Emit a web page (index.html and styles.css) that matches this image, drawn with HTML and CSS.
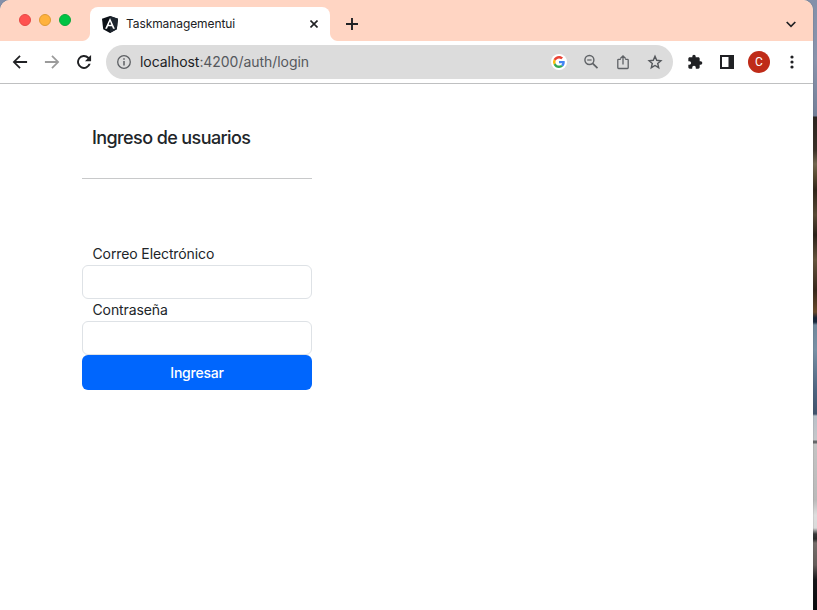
FILE: index.html
```
<!DOCTYPE html>
<html lang="es">
<head>
<meta charset="utf-8">
<title>Taskmanagementui</title>
<link rel="stylesheet" href="styles.css">
</head>
<body>
<div class="window">
  <header class="tabstrip">
    <div class="lights"><i class="light red"></i><i class="light amber"></i><i class="light green"></i></div>
    <div class="tab">
      <svg class="favicon" width="16" height="17" viewBox="0 0 16 17"><path fill="#0b1016" d="M8 0l8 2.8-1.2 10.4L8 17l-6.800-3.800L0 2.800z"/><path fill="#1d252e" d="M8 0l8 2.8-1.2 10.4L8 17z"/><path fill="#fff" fill-rule="evenodd" d="M8 2l4.900 10.700h-1.900l-1-2.400H6l-1 2.400H3.100zM8 5.400L6.700 8.700h2.600z"/></svg>
      <span class="tab-title">Taskmanagementui</span>
      <svg class="tab-close" width="8" height="8" viewBox="0 0 8 8"><path d="M.5.500l7 7M7.500.500l-7 7" stroke="#202124" stroke-width="1.600"/></svg>
    </div>
    <svg class="new-tab" width="12" height="12" viewBox="0 0 12 12"><path d="M6 0v12M0 6h12" stroke="#202124" stroke-width="1.900"/></svg>
    <svg class="chevron" width="10" height="7" viewBox="0 0 10 7"><path d="M.7 1L5 5.400 9.300 1" fill="none" stroke="#202124" stroke-width="1.700"/></svg>
  </header>
  <nav class="toolbar">
    <svg class="back" width="20" height="20" viewBox="0 0 24 24"><path fill="#202124" d="M20.500 10.900H7.300l5.500-5.500L11.300 3.900 3.200 12l8.100 8.100 1.500-1.500-5.500-5.500h13.200z"/></svg>
    <svg class="forward" width="20" height="20" viewBox="0 0 24 24"><path fill="#9b9b9b" d="M3.500 10.900h13.200l-5.500-5.500 1.500-1.500 8.100 8.100-8.100 8.100-1.500-1.500 5.500-5.500H3.500z"/></svg>
    <svg class="reload" width="20" height="20" viewBox="0 0 24 24"><path fill="#202124" d="M17.900 6.100A8.300 8.300 0 1 0 20 14.200h-2.500a6 6 0 1 1-1.200-6.400L13.200 11H20.500V3.600z"/></svg>
    <div class="omnibox">
      <svg class="info" width="14" height="14" viewBox="0 0 14 14"><circle cx="7" cy="7" r="6.300" fill="none" stroke="#5c5f63" stroke-width="1.300"/><path d="M7 3.300v1.500M7 6v4.600" stroke="#5c5f63" stroke-width="1.500"/></svg>
      <span class="url"><b>localhost</b>:4200/auth/login</span>
      <span class="actions">
        <svg width="16" height="16" viewBox="0 0 16 16"><circle cx="8" cy="8" r="8" fill="#fff"/><g transform="translate(2 2) scale(.25)"><path fill="#EA4335" d="M24 9.500c3.540 0 6.710 1.220 9.210 3.600l6.850-6.850C35.900 2.380 30.470 0 24 0 14.620 0 6.510 5.380 2.560 13.220l7.980 6.190C12.430 13.720 17.740 9.500 24 9.500z"/><path fill="#4285F4" d="M46.980 24.550c0-1.570-.15-3.090-.38-4.550H24v9.020h12.940c-.58 2.960-2.260 5.480-4.780 7.180l7.730 6c4.510-4.180 7.090-10.360 7.090-17.650z"/><path fill="#FBBC05" d="M10.530 28.590A14.500 14.500 0 0 1 10.540 19.410l-7.980-6.190a24 24 0 0 0 0 21.560z"/><path fill="#34A853" d="M24 48c6.480 0 11.930-2.130 15.890-5.810l-7.730-6C30 37.640 27.240 38.490 24 38.490c-6.260 0-11.570-4.220-13.470-9.910l-7.980 6.190C6.510 42.620 14.620 48 24 48z"/></g></svg>
        <svg width="16" height="16" viewBox="0 0 16 16"><circle cx="6.400" cy="6" r="4.500" fill="none" stroke="#5f6266" stroke-width="1.400"/><path d="M9.600 9.300l4.900 4.900" stroke="#5f6266" stroke-width="1.700"/><path d="M4.200 6h4.400" stroke="#5f6266" stroke-width="1.200"/></svg>
        <svg width="16" height="16" viewBox="0 0 16 16"><path d="M5.800 5.300H3.600a.8.800 0 0 0-.8.800v7.600a.8.800 0 0 0 .8.800h8.800a.8.800 0 0 0 .8-.8V6.100a.8.800 0 0 0-.8-.8h-2.200M8 10.500V2.200M5.400 4.500L8 1.900l2.600 2.600" fill="none" stroke="#5f6266" stroke-width="1.300"/></svg>
        <svg width="16" height="16" viewBox="0 0 16 16"><path d="M8 2.300l1.700 4 4.200.4-3.200 2.800 1 4.200L8 11.500l-3.700 2.200 1-4.200-3.200-2.800 4.200-.4z" fill="none" stroke="#55585c" stroke-width="1.400"/></svg>
      </span>
    </div>
    <svg class="extensions" width="16" height="16" viewBox="0 0 24 24"><path fill="#202124" d="M20.500 11H19V7c0-1.100-.9-2-2-2h-4V3.500a2.500 2.500 0 0 0-5 0V5H4c-1.100 0-2 .9-2 2v3.800h1.500a2.700 2.700 0 0 1 0 5.400H2V20c0 1.100.9 2 2 2h3.800v-1.500a2.700 2.700 0 0 1 5.400 0V22H17c1.100 0 2-.9 2-2v-4h1.500a2.500 2.500 0 0 0 0-5z"/></svg>
    <svg class="sidepanel" width="14" height="14" viewBox="0 0 14 14"><path fill="#202124" fill-rule="evenodd" d="M0 0h14v14H0zM2 2v10h6.500V2z"/></svg>
    <span class="avatar">C</span>
    <svg class="more" width="4" height="14" viewBox="0 0 4 14"><g fill="#202124"><circle cx="2" cy="2" r="1.600"/><circle cx="2" cy="7" r="1.600"/><circle cx="2" cy="12" r="1.600"/></g></svg>
  </nav>
  <main class="page">
    <form class="login">
      <h1>Ingreso de usuarios</h1>
      <hr>
      <label for="email">Correo Electrónico</label>
      <input id="email" type="email">
      <label for="password">Contraseña</label>
      <input id="password" type="password">
      <button type="button">Ingresar</button>
    </form>
  </main>
</div>
</body>
</html>
```
FILE: styles.css
```
* { box-sizing: border-box; }
body {
  margin: 0;
  height: 610px;
  overflow: hidden;
  font-family: Inter, "Liberation Sans", sans-serif;
  color: #212529;
  background: linear-gradient(#8490aa 0, #8993ac 60px, #747f98 116px, #2d2520 117px, #3a3027 150px, #73674f 164px, #5a4c32 175px, #302519 190px, #594a35 215px, #2b2118 235px, #66553d 260px, #37271b 290px, #6b4b2b 312px, #172436 318px, #17273b 322px, #71889c 325px, #7890a5 350px, #4e6480 390px, #40536c 414px, #b9c1c9 416px, #c5c7ca 440px, #66686a 441px, #66686a 443px, #c4c4c4 444px, #bababa 500px, #dedede 515px, #dadada 528px, #383838 534px, #292929 539px, #766e6b 543px, #655d5a 565px, #151518 580px, #08090c 610px);
}
svg { display: block; flex: none; }
.window {
  width: 813px;
  height: 610px;
  background: #fff;
  border-radius: 10px 10px 0 0;
  overflow: hidden;
  box-shadow: 0 0 1px #444;
}
.tabstrip {
  display: flex;
  height: 41px;
  background: #ffd5c3;
}
.lights { display: flex; gap: 8px; width: 90px; padding: 14px 0 0 19px; }
.light { width: 12px; height: 12px; border-radius: 50%; border: 1px solid; }
.red { background: #ff5250; border-color: #e64844; }
.amber { background: #ffb23c; border-color: #df9a32; }
.green { background: #00c444; border-color: #0ba83d; }
.tab {
  position: relative;
  display: flex;
  align-items: center;
  width: 240px;
  height: 34px;
  margin-top: 7px;
  padding: 0 12px;
  background: #fff;
  border-radius: 8px 8px 0 0;
}
.tab::before, .tab::after {
  content: "";
  position: absolute;
  bottom: 0;
  width: 8px;
  height: 8px;
}
.tab::before { left: -8px; background: radial-gradient(circle at 0 0, #ffd5c3 7.5px, #fff 8.5px); }
.tab::after { right: -8px; background: radial-gradient(circle at 100% 0, #ffd5c3 7.5px, #fff 8.5px); }
.tab-title { margin-left: 8px; padding-bottom: 2px; font-size: 12px; letter-spacing: -.09px; color: #202124; }
.tab-close { margin-left: auto; }
.new-tab { margin: 18px 0 0 16px; }
.chevron { margin: 21px 17px 0 auto; }
.toolbar {
  display: flex;
  align-items: center;
  height: 43px;
  padding-left: 10px;
  border-bottom: 1px solid #bfc0c1;
}
.forward { margin-left: 12px; }
.reload { margin-left: 12px; }
.omnibox {
  display: flex;
  align-items: center;
  width: 567px;
  height: 34px;
  margin-left: 12px;
  padding: 0 10px 0 11px;
  border-radius: 17px;
  background: #dcdcdc;
}
.url { margin-left: 9px; padding-bottom: 2px; font-size: 14px; letter-spacing: -.05px; color: #55585c; }
.url b { font-weight: 400; color: #202124; }
.actions { display: flex; gap: 16px; margin-left: auto; }
.extensions { margin-left: 14px; }
.sidepanel { margin-left: 17px; }
.avatar {
  width: 22px;
  height: 22px;
  margin-left: 14px;
  border-radius: 50%;
  background: #bf2b18;
  color: #fff;
  font: 12px/22px Roboto, sans-serif;
  text-align: center;
}
.more { margin-left: 19.500px; }
.page { padding: 42px 82px; }
.login { display: flex; flex-direction: column; width: 230px; }
h1 {
  margin: 0 0 0 10px;
  font-size: 18px;
  line-height: 24px;
  font-weight: 500;
  letter-spacing: -.6px;
  white-space: nowrap;
}
hr { width: 100%; height: 1px; margin: 28px 0 64px; border: 0; background: #c8c9ca; }
label { padding-left: 10.500px; font-size: 14px; line-height: 22px; letter-spacing: -.11px; }
input {
  width: 230px;
  height: 34px;
  border: 1px solid #dee2e6;
  border-radius: 6px;
  background: #fff;
}
button {
  height: 35px;
  padding: 0;
  border: 0;
  border-radius: 6px;
  background: #0066fd;
  color: #fff;
  font: 500 14px/35px Inter, sans-serif;
  letter-spacing: -.22px;
}
```
